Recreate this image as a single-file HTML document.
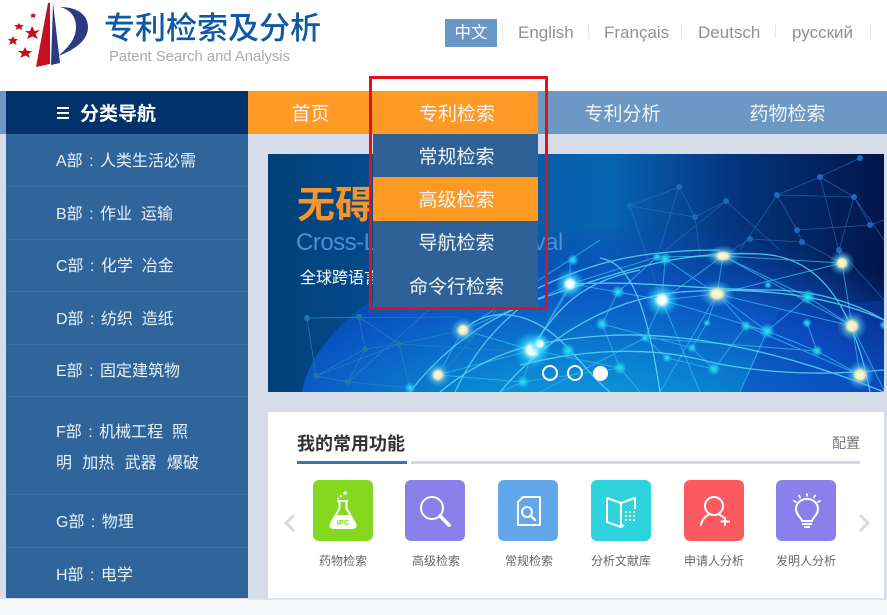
<!DOCTYPE html>
<html lang="zh">
<head>
<meta charset="utf-8">
<title>专利检索及分析</title>
<style>
html,body{margin:0;padding:0;}
body{width:887px;height:615px;position:relative;overflow:hidden;background:#d6dde9;font-family:"Liberation Sans","Noto Sans CJK SC",sans-serif;}
.a{position:absolute;white-space:pre;}
.s{position:absolute;left:56px;font-size:16px;line-height:24px;color:#e8f1fa;white-space:pre;}
.s span{margin:0 2px;}
.l{position:absolute;left:6px;width:242px;height:1px;background:#386ea3;}
.n{position:absolute;top:91px;height:43px;line-height:47px;font-size:19px;color:#eef4fa;text-align:center;}
.d{position:absolute;left:373px;width:165px;height:43px;line-height:47px;font-size:19px;color:#eef4fa;text-align:center;}
.sep{position:absolute;top:24px;width:1px;height:14px;background:#e8e8e8;}
.lang{position:absolute;top:19px;height:28px;line-height:28px;font-size:17px;color:#8d9198;white-space:pre;}
.ic{position:absolute;top:480px;width:60px;height:61px;border-radius:6px;}
.ic svg{position:absolute;left:0;top:0;}
.lb{position:absolute;top:552px;width:80px;height:18px;line-height:18px;text-align:center;font-size:12px;color:#666;white-space:pre;}
</style>
</head>
<body>
<div class="a" style="left:0;top:0;width:887px;height:91px;background:#fff;"></div>

<svg class="a" style="left:0;top:0;" width="100" height="72" viewBox="0 0 100 72">
<polygon points="48,3 50,3 50,64 36,67" fill="#c5111f"/>
<polygon points="53,3 60,63 51,65" fill="#2c3a84"/>
<path d="M60,7 C80,7 88,17 88,27 C88,41 74,50 58,56 C68,48 76,39 76,27 C76,17 71,10 60,7Z" fill="#2c3a84"/>
<g fill="#c5111f">
<polygon points="32,26 34.5,31 40,30 35.500,34 38,39 32.500,36.500 27,39 29,34 25,31 30,31"/>
<polygon points="25,47 27,51 32,51 28.500,54 30,58 25.500,55.500 20,58 22,54 18,51 23,51"/>
<polygon points="13,36 14.500,39 18,39 15.500,41.500 16.500,45 13,43 9,45 10.500,41.500 8,39 11.500,39"/>
<polygon points="19,23 20.500,25 24,25 21.500,27 22,30 19,28.500 16,30 16.500,27 14,25 17.500,25"/>
<polygon points="33,13 34,14.500 36,14 35,16 35,18 33,17 31,18 31.500,16 30,14.500 32,14.500"/>
</g>
</svg>

<div class="a" style="left:104px;top:7px;font-size:31px;line-height:44px;color:#0f58a6;font-weight:500;">专利检索及分析</div>
<div class="a" style="left:109px;top:48px;font-size:14.800px;line-height:18px;color:#a8abb0;">Patent Search and Analysis</div>

<div class="a" style="left:445px;top:19px;width:52px;height:28px;line-height:29px;text-align:center;background:#6a98c6;color:#fff;font-size:16.500px;">中文</div>
<div class="sep" style="left:502px"></div>
<div class="lang" style="left:518px">English</div>
<div class="sep" style="left:588px"></div>
<div class="lang" style="left:604px">Français</div>
<div class="sep" style="left:681px"></div>
<div class="lang" style="left:698px">Deutsch</div>
<div class="sep" style="left:775px"></div>
<div class="lang" style="left:792px">русский</div>
<div class="sep" style="left:870px"></div>

<!-- nav -->
<div class="a" style="left:0;top:91px;width:887px;height:43px;background:#6d98c3;"></div>
<div class="a" style="left:6px;top:91px;width:242px;height:43px;background:#02316b;"></div>
<div class="a" style="left:248px;top:91px;width:290px;height:43px;background:#ff9a25;"></div>
<div class="a" style="left:57px;top:107px;width:12px;height:2px;background:#fff;box-shadow:0 5px 0 #fff,0 10px 0 #fff;"></div>
<div class="a" style="left:80px;top:91px;height:43px;line-height:48px;font-size:19px;font-weight:700;color:#fff;">分类导航</div>
<div class="n" style="left:248px;width:125px;">首页</div>
<div class="n" style="left:373px;width:168px;">专利检索</div>
<div class="n" style="left:540px;width:165px;">专利分析</div>
<div class="n" style="left:705px;width:165px;">药物检索</div>

<!-- sidebar -->
<div class="a" style="left:6px;top:134px;width:242px;height:464px;background:#2f659a;"></div>
<div class="s" style="top:150px">A部<span> : </span>人类生活必需</div><div class="l" style="top:186px"></div>
<div class="s" style="top:203px">B部<span> : </span>作业  运输</div><div class="l" style="top:239px"></div>
<div class="s" style="top:255px">C部<span> : </span>化学  冶金</div><div class="l" style="top:291px"></div>
<div class="s" style="top:308px">D部<span> : </span>纺织  造纸</div><div class="l" style="top:344px"></div>
<div class="s" style="top:360px">E部<span> : </span>固定建筑物</div><div class="l" style="top:396px"></div>
<div class="s" style="top:421px">F部<span> : </span>机械工程  照</div>
<div class="s" style="top:452px;word-spacing:.7px;">明  加热  武器  爆破</div><div class="l" style="top:494px"></div>
<div class="s" style="top:511px">G部<span> : </span>物理</div><div class="l" style="top:547px"></div>
<div class="s" style="top:564px">H部<span> : </span>电学</div>

<!-- banner -->
<svg class="a" style="left:268px;top:154px;" width="616" height="238" viewBox="268 154 616 238">
<defs>
<linearGradient id="bg" x1="0" y1="0" x2="1" y2="0">
<stop offset="0" stop-color="#024079"/><stop offset=".25" stop-color="#035094"/><stop offset=".55" stop-color="#0765b4"/><stop offset=".75" stop-color="#04357f"/><stop offset="1" stop-color="#02154a"/>
</linearGradient>
<radialGradient id="globe" cx=".38" cy=".6" r=".62">
<stop offset="0" stop-color="#12a8dc"/><stop offset=".35" stop-color="#0a86d2"/><stop offset=".7" stop-color="#0a55c4" stop-opacity=".95"/><stop offset="1" stop-color="#0a45b0" stop-opacity="0"/>
</radialGradient>
<radialGradient id="gw"><stop offset="0" stop-color="#fff"/><stop offset=".25" stop-color="#e8ffff"/><stop offset=".5" stop-color="#40e0ff" stop-opacity=".65"/><stop offset="1" stop-color="#20c0ff" stop-opacity="0"/></radialGradient>
<radialGradient id="gy"><stop offset="0" stop-color="#fff8d8"/><stop offset=".3" stop-color="#f0f0c0"/><stop offset=".55" stop-color="#60c0e0" stop-opacity=".6"/><stop offset="1" stop-color="#20a0ff" stop-opacity="0"/></radialGradient>
<radialGradient id="gc"><stop offset="0" stop-color="#30e8f0"/><stop offset=".5" stop-color="#20c8ea" stop-opacity=".75"/><stop offset="1" stop-color="#20a0ff" stop-opacity="0"/></radialGradient>
</defs>
<rect x="268" y="154" width="616" height="238" fill="url(#bg)"/>
<ellipse cx="670" cy="410" rx="370" ry="185" fill="url(#globe)"/>
<polygon points="780,310 884,300 884,392 740,392" fill="#0c3fb8" opacity=".4"/>

<g filter="blur(.35px)">
<g stroke="#2a86c0" stroke-width=".8" fill="none" opacity=".8">
<path d="M307,318L359,317L365,349L316,376L307,318M359,317L399,344L365,349M399,344L316,376M399,344L410,388M316,376L348,382L410,388M365,349L348,382M307,318L460,317M399,344L463,330M348,382L440,300M399,344L530,352M440,376L500,306"/>
</g>
<g stroke="#2c72b8" stroke-width=".8" fill="none" opacity=".7">
<path d="M630,206L679,187L695,217L630,206M630,206L662,300M679,187L657,257M695,217L726,201L657,257M695,217L700,256M726,201L780,250M777,195L820,177L854,197L839,250M777,195L740,250M777,195L797,230L802,242L842,263M820,177L860,158M820,177L842,263M854,197L870,225L797,230M854,197L884,240M802,242L750,239M870,225L884,220M839,250L884,300M777,195L854,197M750,239L723,256"/>
</g>
<g stroke="#34b4ee" stroke-width="1" fill="none" opacity=".8">
<path d="M570,284L657,257L723,256L842,263M572,284L662,300L717,294L852,326M662,300L723,256M717,294L723,256L808,297L852,326M717,294L767,331L817,351L860,375M717,294L660,392M717,294L842,263M662,300L645,338L667,358L714,369M662,300L700,392M618,292L662,300M618,292L602,324L620,368M657,257L618,292M665,259L662,300M665,259L717,294M717,294L746,326L714,369M746,326L767,331L808,297M852,326L860,375M852,326L884,390M842,263L852,326M723,256L852,326M662,300L767,331M602,324L692,348L714,369M692,348L707,323L717,294M807,323L817,351L860,375M746,326L860,375M767,331L740,392M645,338L540,392M645,338L817,351M572,284L532,350L523,382M572,284L463,330M463,330L532,350M532,350L438,375M463,330L438,375M532,350L620,368M438,375L523,382L620,368M570,260L570,284L532,350M600,240L463,330M620,368L640,392M523,382L500,392"/>
</g>
<g stroke="#5fd8f8" stroke-width="1.300" fill="none" opacity=".85">
<path d="M410,392C450,340 500,310 560,292C620,272 680,250 760,254C810,256 850,290 870,392"/>
<path d="M440,392C490,350 540,340 600,336C680,330 780,350 884,392"/>
<path d="M500,392C540,345 600,300 680,292C760,286 830,296 884,320"/>
<path d="M530,292C590,262 640,250 720,250"/>
<path d="M463,330C490,305 530,312 560,340C580,360 595,380 610,392"/>
<path d="M600,258C625,262 645,290 660,392"/>
<path d="M530,352C560,300 590,280 640,270"/>
<path d="M520,365C580,350 650,345 710,362C770,375 830,375 884,370"/>
<path d="M572,284C640,280 700,290 770,290C810,290 850,300 884,320"/>
<path d="M455,392C470,360 490,330 530,300"/>
</g>
<g fill="#1a6ab8">
<circle cx="630" cy="206" r="3"/><circle cx="679" cy="187" r="3"/><circle cx="695" cy="217" r="3"/><circle cx="726" cy="201" r="3"/><circle cx="777" cy="195" r="3"/><circle cx="820" cy="177" r="3"/><circle cx="854" cy="197" r="3"/><circle cx="860" cy="158" r="3"/><circle cx="797" cy="230" r="3"/><circle cx="802" cy="242" r="3"/><circle cx="750" cy="239" r="3"/><circle cx="870" cy="225" r="3"/><circle cx="839" cy="250" r="3"/>
</g>
<g fill="#1f78a8">
<circle cx="307" cy="318" r="3"/><circle cx="359" cy="317" r="3"/><circle cx="365" cy="349" r="3"/><circle cx="399" cy="344" r="3"/><circle cx="316" cy="376" r="3"/><circle cx="348" cy="382" r="3"/>
</g>
<g fill="url(#gc)">
<circle cx="410" cy="388" r="6"/><circle cx="523" cy="382" r="7"/><circle cx="568" cy="351" r="8"/><circle cx="573" cy="260" r="6"/><circle cx="665" cy="259" r="7"/><circle cx="657" cy="257" r="5"/><circle cx="618" cy="292" r="7"/><circle cx="602" cy="324" r="7"/><circle cx="767" cy="331" r="8"/><circle cx="808" cy="297" r="8"/><circle cx="714" cy="369" r="7"/><circle cx="620" cy="368" r="7"/><circle cx="746" cy="326" r="6"/><circle cx="817" cy="351" r="6"/><circle cx="645" cy="338" r="5"/><circle cx="667" cy="358" r="5"/><circle cx="692" cy="348" r="5"/><circle cx="707" cy="323" r="4"/><circle cx="807" cy="323" r="5"/><circle cx="768" cy="285" r="4"/><circle cx="884" cy="325" r="5"/>
</g>
<circle cx="463" cy="330" r="13" fill="url(#gy)"/>
<circle cx="438" cy="375" r="13" fill="url(#gy)"/>
<circle cx="532" cy="350" r="19" fill="url(#gw)"/>
<circle cx="540" cy="344" r="11" fill="url(#gw)"/>
<circle cx="570" cy="284" r="15" fill="url(#gw)"/>
<circle cx="662" cy="300" r="17" fill="url(#gw)"/>
<ellipse cx="717" cy="294" rx="18" ry="14" fill="url(#gy)"/>
<ellipse cx="723" cy="256" rx="17" ry="11" fill="url(#gy)"/>
<circle cx="842" cy="263" r="13" fill="url(#gy)"/>
<circle cx="852" cy="326" r="15" fill="url(#gy)"/>
<circle cx="860" cy="375" r="15" fill="url(#gy)"/>
</g>
</svg>

<div class="a" style="left:297px;top:179px;font-size:38px;line-height:54px;font-weight:700;color:#f7942a;">无碍跨语言</div>
<div class="a" style="left:296px;top:226px;font-size:24px;line-height:34px;letter-spacing:-.5px;color:#4d8ed6;">Cross-Language Retrieval</div>
<div class="a" style="left:300px;top:267px;font-size:16px;line-height:24px;color:#fff;">全球跨语言专利检索</div>

<!-- dots -->
<div class="a" style="left:542px;top:365px;width:12px;height:12px;border:2px solid #fff;border-radius:50%;"></div>
<div class="a" style="left:567px;top:365px;width:12px;height:12px;border:2px solid #fff;border-radius:50%;"></div>
<div class="a" style="left:593px;top:366px;width:15px;height:15px;background:#fff;border-radius:50%;"></div>

<!-- dropdown -->
<div class="a" style="left:373px;top:134px;width:165px;height:173px;background:#2f6197;"></div>
<div class="a" style="left:373px;top:177px;width:165px;height:44px;background:#ff9a25;"></div>
<div class="d" style="top:134px;left:374px;">常规检索</div>
<div class="d" style="top:177px;left:374px;">高级检索</div>
<div class="d" style="top:220px;left:374px;">导航检索</div>
<div class="d" style="top:264px;left:374px;">命令行检索</div>
<div class="a" style="left:369px;top:76px;width:173px;height:228px;border:3px solid #e2101a;"></div>

<!-- card -->
<div class="a" style="left:268px;top:412px;width:616px;height:187px;background:#fff;"></div>
<div class="a" style="left:0;top:599px;width:887px;height:16px;background:#f7f9fb;"></div>
<div class="a" style="left:248px;top:598px;width:639px;height:2px;background:#dfe4ec;"></div>
<div class="a" style="left:297px;top:431px;font-size:18px;line-height:26px;font-weight:700;color:#333;">我的常用功能</div>
<div class="a" style="left:297px;top:461px;width:110px;height:3px;background:#3a72b5;"></div>
<div class="a" style="left:411px;top:461px;width:449px;height:3px;background:#d0d8e6;"></div>
<div class="a" style="left:832px;top:433px;font-size:14px;line-height:20px;color:#777;">配置</div>

<svg class="a" style="left:283px;top:513px;" width="14" height="20" viewBox="0 0 14 20"><path d="M11,2L3,10L11,18" fill="none" stroke="#d3dae4" stroke-width="3"/></svg>
<svg class="a" style="left:857px;top:513px;" width="14" height="20" viewBox="0 0 14 20"><path d="M3,2L11,10L3,18" fill="none" stroke="#d3dae4" stroke-width="3"/></svg>

<div class="ic" style="left:313px;background:#84d81f;"><svg width="60" height="61" viewBox="0 0 60 61">
<circle cx="32" cy="13" r="1.800" fill="#fff"/><circle cx="28" cy="16" r="1.300" fill="#fff"/><circle cx="25" cy="18.500" r="1" fill="#fff"/>
<path d="M24,21h11M26.500,21v7.500L18,43.500Q16,48 21,48H39Q44,48 42,43.500L33.500,28.500V21" fill="none" stroke="#fff" stroke-width="2"/>
<path d="M24,35H37L42,44Q43,47 39,47H21Q17,47 18,44Z" fill="#fff"/>
<text x="30" y="45" font-size="7.500" font-weight="700" text-anchor="middle" fill="#84d81f" font-family="Liberation Sans,sans-serif">IPC</text>
</svg></div>
<div class="ic" style="left:405px;background:#8b80ea;"><svg width="60" height="61" viewBox="0 0 60 61">
<circle cx="27" cy="28" r="11" fill="none" stroke="#fff" stroke-width="2"/><path d="M35,36L44,45" stroke="#fff" stroke-width="3.500" stroke-linecap="round"/>
</svg></div>
<div class="ic" style="left:498px;background:#62a6ec;"><svg width="60" height="61" viewBox="0 0 60 61">
<path d="M25,17H42V45H20V22Z" fill="none" stroke="#fff" stroke-width="2" stroke-linejoin="round"/>
<circle cx="29" cy="32" r="5" fill="none" stroke="#fff" stroke-width="2"/><path d="M33,36L37,40" stroke="#fff" stroke-width="2.500" stroke-linecap="round"/>
</svg></div>
<div class="ic" style="left:591px;background:#2fd3de;"><svg width="60" height="61" viewBox="0 0 60 61">
<path d="M16,18L30,23L44,18V29M16,18V42L30,47V23M30,47L33,45" fill="none" stroke="#fff" stroke-width="2" stroke-linejoin="round"/>
<g fill="#fff"><rect x="34" y="31" width="2" height="2"/><rect x="38" y="31" width="2" height="2"/><rect x="42" y="31" width="2" height="2"/><rect x="34" y="35" width="2" height="2"/><rect x="38" y="35" width="2" height="2"/><rect x="42" y="35" width="2" height="2"/><rect x="34" y="39" width="2" height="2"/><rect x="38" y="39" width="2" height="2"/><rect x="42" y="39" width="2" height="2"/></g>
</svg></div>
<div class="ic" style="left:684px;background:#fb5a61;"><svg width="60" height="61" viewBox="0 0 60 61">
<circle cx="30" cy="26" r="9" fill="none" stroke="#fff" stroke-width="2"/>
<path d="M17,45C18,39 22,36 25,34.500M35,34.500C37,35.500 39,36.500 40,38" fill="none" stroke="#fff" stroke-width="2" stroke-linecap="round"/>
<path d="M41,37V46M36.500,41.500H46" stroke="#fff" stroke-width="2"/>
</svg></div>
<div class="ic" style="left:776px;background:#8b80ea;"><svg width="60" height="61" viewBox="0 0 60 61">
<path d="M26,41C25,37 20,35 20,29C20,23 25,19 31,19C37,19 42,23 42,29C42,35 37,37 36,41Z" fill="none" stroke="#fff" stroke-width="2" stroke-linejoin="round"/>
<path d="M26,44H36M28,47H34" stroke="#fff" stroke-width="2"/>
<path d="M31,14V16M23,15.500L24,17.500M39,15.500L38,17.500M18,21L20,22M44,21L42,22" stroke="#fff" stroke-width="1.800" stroke-linecap="round"/>
</svg></div>

<div class="lb" style="left:303px">药物检索</div>
<div class="lb" style="left:396px">高级检索</div>
<div class="lb" style="left:489px">常规检索</div>
<div class="lb" style="left:581px">分析文献库</div>
<div class="lb" style="left:674px">申请人分析</div>
<div class="lb" style="left:766px">发明人分析</div>
</body>
</html>
